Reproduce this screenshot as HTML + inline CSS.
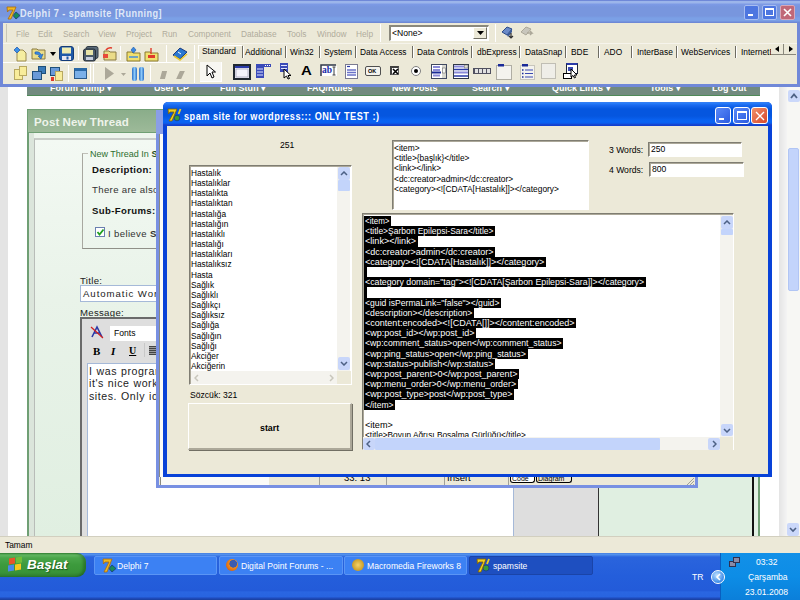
<!DOCTYPE html>
<html><head><meta charset="utf-8">
<style>
*{margin:0;padding:0;box-sizing:border-box}
html,body{width:800px;height:600px;overflow:hidden;background:#fff;font-family:"Liberation Sans",sans-serif;position:relative}
.a{position:absolute}
.t{position:absolute;white-space:nowrap;line-height:1}
.mi{position:absolute;top:30px;font-size:8.3px;color:#b0ac9c;white-space:nowrap;line-height:1}
.tab{position:absolute;top:48px;font-size:8.4px;color:#000;white-space:nowrap;line-height:1}
.tsep{position:absolute;top:46px;width:2px;height:12px;background:#6e6c62;border-right:1px solid #fff}
.vsep{position:absolute;width:1px;background:#aca899;border-right:1px solid #fff}
.grip{position:absolute;width:2px;background:repeating-linear-gradient(#d4d0c0 0 2px,transparent 2px 3px)}
</style></head><body>

<!-- ===== Firefox page background ===== -->
<div class="a" style="left:0;top:84px;width:8px;height:453px;background:#e4e4e4"></div>
<div class="a" style="left:779px;top:84px;width:8px;height:453px;background:linear-gradient(90deg,#e4e4e4,#f4f4f4)"></div>
<!-- scrollbar -->
<div class="a" style="left:787px;top:84px;width:13px;height:453px;background:#f7f7f4"></div>
<div class="a" style="left:788px;top:90px;width:12px;height:12px;background:#cbd8fa;border-radius:2px"></div>
<svg class="a" style="left:790px;top:93px" width="8" height="6"><path d="M1 5 L4 1.5 L7 5" stroke="#4d6185" stroke-width="1.8" fill="none"/></svg>
<div class="a" style="left:788px;top:148px;width:11px;height:143px;background:#c3d4fb;border:1px solid #b1c5f4;border-radius:2px"></div>
<div class="a" style="left:787px;top:523px;width:12px;height:13px;background:#cbd8fa;border-radius:2px"></div>
<svg class="a" style="left:789px;top:527px" width="8" height="6"><path d="M1 1 L4 4 L7 1" stroke="#4d6185" stroke-width="1.6" fill="none"/></svg>

<!-- nav bar -->
<div class="a" style="left:27px;top:84px;width:733px;height:12px;background:#728a7f;border-bottom:1px solid #4f8a58"></div>
<div class="t" style="left:50px;top:84px;font-size:9px;font-weight:bold;color:#fff">Forum Jump &#9662;</div>
<div class="t" style="left:154px;top:84px;font-size:9px;font-weight:bold;color:#fff">User CP</div>
<div class="t" style="left:220px;top:84px;font-size:9px;font-weight:bold;color:#fff">Full Stuff &#9662;</div>
<div class="t" style="left:307px;top:84px;font-size:9px;font-weight:bold;color:#fff">FAQ/Rules</div>
<div class="t" style="left:392px;top:84px;font-size:9px;font-weight:bold;color:#fff">New Posts</div>
<div class="t" style="left:472px;top:84px;font-size:9px;font-weight:bold;color:#fff">Search &#9662;</div>
<div class="t" style="left:552px;top:84px;font-size:9px;font-weight:bold;color:#fff">Quick Links &#9662;</div>
<div class="t" style="left:650px;top:84px;font-size:9px;font-weight:bold;color:#fff">Tools &#9662;</div>
<div class="t" style="left:712px;top:84px;font-size:9px;font-weight:bold;color:#fff">Log Out</div>

<!-- Post New Thread panel -->
<div class="a" style="left:27px;top:109px;width:733px;height:428px;background:#eef5ee;border-left:2px solid #6f9f74;border-right:2px solid #6f9f74"></div>
<div class="a" style="left:27px;top:109px;width:733px;height:24px;background:linear-gradient(#8aad8a,#9dba99);border:1px solid #6f9f74"></div>
<div class="t" style="left:34px;top:117px;font-size:11.5px;font-weight:bold;color:#eef3ea;letter-spacing:0.1px">Post New Thread</div>
<div class="a" style="left:29px;top:133px;width:5px;height:404px;background:#dbe5db"></div><div class="a" style="left:34px;top:138px;width:720px;height:400px;background:linear-gradient(#f3f9f3,#e9f3e9 40%,#e0efe1);border-left:1px solid #b8bcb8;border-top:2px solid #c8ccc8"></div>
<!-- fieldset -->
<div class="a" style="left:82px;top:153px;width:300px;height:96px;border:1px solid #c0c0b8;border-left:1px solid #a8a8a0;border-bottom:1px solid #909088"></div>
<div class="a" style="left:88px;top:149px;width:80px;height:9px;background:#f2f8f2"></div>
<div class="t" style="left:90px;top:150px;font-size:9px;color:#2e6f30">New Thread In <b style="color:#1f4f1f">Se</b></div>
<div class="t" style="left:92px;top:165px;font-size:9.6px;font-weight:bold;color:#111;letter-spacing:0.35px">Description:</div>
<div class="t" style="left:92px;top:185px;font-size:9.6px;color:#333;letter-spacing:0.35px">There are also</div>
<div class="t" style="left:92px;top:206px;font-size:9.6px;font-weight:bold;color:#111;letter-spacing:0.35px">Sub-Forums:</div>
<div class="a" style="left:95px;top:227px;width:10px;height:10px;background:#fff;border:1px solid #6a7fb0"></div>
<svg class="a" style="left:96px;top:228px" width="9" height="8"><path d="M1.5 4 L3.5 6.5 L7.5 1.5" stroke="#21a121" stroke-width="1.8" fill="none"/></svg>
<div class="t" style="left:108px;top:229px;font-size:9.6px;color:#333;letter-spacing:0.35px">I believe <b>S</b></div>
<div class="t" style="left:80px;top:276px;font-size:9.6px;color:#222;letter-spacing:0.3px">Title:</div>
<div class="a" style="left:80px;top:285px;width:400px;height:17px;background:#fff;border:1px solid #a5b9d8"></div>
<div class="t" style="left:83px;top:289px;font-size:9.6px;color:#222;letter-spacing:0.95px">Automatic Wor</div>
<div class="t" style="left:80px;top:308px;font-size:9.6px;color:#222;letter-spacing:0.3px">Message:</div>
<!-- editor -->
<div class="a" style="left:80px;top:317px;width:519px;height:220px;background:#dedede;border-left:2px solid #6a6a6a;border-top:2px solid #6a6a6a;border-right:1px solid #333"></div>
<div class="a" style="left:110px;top:326px;width:90px;height:15px;background:#fff"></div>
<div class="t" style="left:114px;top:329px;font-size:8.6px;color:#000">Fonts</div>
<svg class="a" style="left:90px;top:325px" width="14" height="14"><path d="M2 12 L7 2 L12 12 M4 8 H10" stroke="#2a3aa8" stroke-width="1.6" fill="none"/><path d="M1 2 L13 13" stroke="#d02020" stroke-width="1.2"/></svg>
<div class="t" style="left:93px;top:346px;font-size:11px;font-weight:bold;color:#000;font-family:'Liberation Serif'">B</div>
<div class="t" style="left:111px;top:346px;font-size:11px;font-weight:bold;font-style:italic;color:#000;font-family:'Liberation Serif'">I</div>
<div class="t" style="left:129px;top:346px;font-size:10px;font-weight:bold;text-decoration:underline;color:#000;font-family:'Liberation Serif'">U</div>
<div class="a" style="left:144px;top:343px;width:1px;height:14px;background:#c8c8c8"></div>
<div class="a" style="left:149px;top:346px;width:9px;height:9px;background:repeating-linear-gradient(#444 0 1px,#999 1px 2px)"></div>
<div class="a" style="left:87px;top:363px;width:427px;height:174px;background:#fff;border-left:1px solid #a5b9d8;border-top:1px solid #a5b9d8;border-right:1px solid #a5b9d8"></div>
<div class="t" style="left:89px;top:364.5px;font-size:10.6px;color:#222;letter-spacing:0.55px;word-spacing:0.5px;line-height:12.5px">I was programming<br>it's nice working<br>sites. Only idea</div>
<!-- right side of page visible -->
<div class="a" style="left:600px;top:300px;width:152px;height:237px;background:#e0efe1"></div>
<div class="a" style="left:752px;top:477px;width:2px;height:60px;background:#111"></div>
<div class="a" style="left:754px;top:477px;width:6px;height:60px;background:#e2f0e4;border-right:2px solid #6f9f74"></div>

<!-- ===== Firefox status bar ===== -->
<div class="a" style="left:0;top:536px;width:800px;height:17px;background:#ece9d8;border-top:1px solid #d2cfbf"></div>
<div class="t" style="left:5px;top:541px;font-size:8.4px;color:#000">Tamam</div>

<!-- ===== Taskbar ===== -->
<div class="a" style="left:0;top:553px;width:800px;height:47px;background:linear-gradient(#3a6fd8 0,#5a9af0 1px,#2a64dd 4px,#245edb 50%,#235bd9 80%,#2a66e2 83%,#2864e0 93%,#1f4cc0 96%,#1a3e9c 100%)"></div>
<div class="a" style="left:0;top:553px;width:86px;height:24px;background:linear-gradient(#3a8a3a 0,#62b862 2px,#4aa54a 5px,#3c9a3c 50%,#399439 80%,#2f7f30 100%);border-radius:0 9px 9px 0;box-shadow:inset -3px 0 3px rgba(0,40,0,.3)"></div>
<!-- windows logo -->
<div class="a" style="left:9px;top:558px;width:6px;height:6px;background:#e8542a;transform:skewY(-8deg)"></div>
<div class="a" style="left:16px;top:557px;width:6px;height:6px;background:#6fbe3a;transform:skewY(-8deg)"></div>
<div class="a" style="left:8px;top:565px;width:6px;height:6px;background:#4a8ae8;transform:skewY(-8deg)"></div>
<div class="a" style="left:15px;top:564px;width:6px;height:6px;background:#f8c81e;transform:skewY(-8deg)"></div>
<div class="t" style="left:27px;top:558px;font-size:13.5px;font-weight:bold;font-style:italic;color:#fff;text-shadow:1px 1px 1px #1c5a1c">Başlat</div>
<!-- task buttons -->
<div class="a" style="left:94px;top:556px;width:123px;height:19px;background:#3c81f3;border:1px solid #5a95f5;border-radius:2px"></div>
<div class="a" style="left:219px;top:556px;width:124px;height:19px;background:#3c81f3;border:1px solid #5a95f5;border-radius:2px"></div>
<div class="a" style="left:344px;top:556px;width:123px;height:19px;background:#3c81f3;border:1px solid #5a95f5;border-radius:2px"></div>
<div class="a" style="left:469px;top:556px;width:124px;height:19px;background:#1e4fc0;border:1px solid #1a44a8;border-radius:2px"></div>
<svg class="a" style="left:101px;top:558px" width="16" height="16"><path d="M11 7 L15 10.5 L11 14 L8 10.5Z" fill="#1a8a5a" stroke="#1a3a7a" stroke-width="0.8"/><path d="M2 1 H11 L6 14 H3 L8 4 H4 L2.5 6Z" fill="#f0b820" stroke="#a86a10" stroke-width="0.8"/></svg>
<div class="t" style="left:117px;top:562px;font-size:8.6px;color:#fff">Delphi 7</div>
<div class="a" style="left:226px;top:559px;width:12px;height:12px;border-radius:50%;background:radial-gradient(circle at 60% 40%,#3a5bb0 0 35%,#f08a1a 40%,#c84a0a 100%)"></div>
<div class="t" style="left:241px;top:562px;font-size:8.6px;color:#fff">Digital Point Forums - ...</div>
<div class="a" style="left:352px;top:559px;width:12px;height:12px;border-radius:50%;background:radial-gradient(#f4d26a,#b8860b)"></div>
<div class="t" style="left:367px;top:562px;font-size:8.6px;color:#fff">Macromedia Fireworks 8</div>
<svg class="a" style="left:476px;top:558px" width="16" height="16"><circle cx="10" cy="10" r="3" fill="#3a9a3a" stroke="#1a3a8a" stroke-width="0.8"/><path d="M1 1 H10 L5 14 H2 L7 4 H3 L1.5 6Z" fill="#f0d020" stroke="#806000" stroke-width="0.8"/><path d="M13 1 L11 6" stroke="#f0d020" stroke-width="1.8"/></svg>
<div class="t" style="left:493px;top:562px;font-size:8.6px;color:#fff">spamsite</div>
<!-- tray -->
<div class="a" style="left:720px;top:553px;width:80px;height:47px;background:linear-gradient(#1290e8 0,#0d8de6 50%,#0b7fda 100%);border-left:1px solid #0a5ec0"></div>
<div class="t" style="left:692px;top:573px;font-size:8.6px;color:#fff">TR</div>
<div class="a" style="left:711px;top:570px;width:14px;height:14px;border-radius:50%;background:radial-gradient(circle at 40% 35%,#bfe0ff,#3a8ae8 70%);border:1px solid #fff"></div>
<svg class="a" style="left:715px;top:573px" width="7" height="8"><path d="M5 1 L2 4 L5 7" stroke="#fff" stroke-width="1.6" fill="none"/></svg>
<div class="a" style="left:729px;top:561px;width:7px;height:6px;background:#8a8aa8;border:1px solid #303050"></div><div class="a" style="left:733px;top:557px;width:7px;height:6px;background:#8a8aa8;border:1px solid #303050"></div>
<div class="t" style="left:756px;top:558px;font-size:8.6px;color:#fff">03:32</div>
<div class="t" style="left:748px;top:573px;font-size:8.6px;color:#fff">Çarşamba</div>
<div class="t" style="left:745px;top:588px;font-size:8.6px;color:#fff">23.01.2008</div>

<!-- ===== Delphi IDE window ===== -->
<div class="a" style="left:0;top:0;width:800px;height:87px;background:#7088d8"></div>
<div class="a" style="left:0;top:0;width:800px;height:23px;background:linear-gradient(#6f88d8 0,#6f88d8 1px,#9cb5ea 1px,#9cb5ea 3px,#7d9ae6 4px,#7896de 7px,#7896de 16px,#7ba0e6 18px,#7ba0e6 21px,#6d88d6 22px)"></div>
<div class="a" style="left:3px;top:23px;width:794px;height:61px;background:#ece9d8"></div>
<svg class="a" style="left:5px;top:5px" width="16" height="16"><path d="M11 7 L15 10.5 L11 14 L8 10.5Z" fill="#1a8a5a" stroke="#1a3a7a" stroke-width="0.8"/><path d="M2 2 H11 L6 14 H3 L8 5 H4 L2.5 7Z" fill="#f0b820" stroke="#a86a10" stroke-width="0.8"/></svg>
<div class="t" style="left:20px;top:8.3px;font-size:11px;font-weight:bold;color:#dfe8f8;letter-spacing:0.55px;transform-origin:0 0;transform:scaleX(0.83)">Delphi 7 - spamsite [Running]</div>
<!-- title buttons -->
<div class="a" style="left:744px;top:5px;width:15px;height:15px;background:#4d76e0;border:1px solid #a8bdf0;border-radius:2px"></div>
<div class="a" style="left:748px;top:14px;width:5px;height:2px;background:#fff"></div>
<div class="a" style="left:762px;top:5px;width:15px;height:15px;background:#4d76e0;border:1px solid #a8bdf0;border-radius:2px"></div>
<div class="a" style="left:765px;top:8px;width:9px;height:8px;border:1px solid #fff;border-top:2px solid #fff"></div>
<div class="a" style="left:780px;top:5px;width:15px;height:15px;background:#c06878;border:1px solid #d8a8b8;border-radius:2px"></div>
<svg class="a" style="left:783px;top:8px" width="9" height="9"><path d="M1 1 L8 8 M8 1 L1 8" stroke="#fff" stroke-width="1.6"/></svg>

<!-- menu -->
<div class="a" style="left:6px;top:24px;width:1px;height:18px;background:#c9c6b6"></div>
<div class="mi" style="left:16px">File</div>
<div class="mi" style="left:38px">Edit</div>
<div class="mi" style="left:63px">Search</div>
<div class="mi" style="left:98px">View</div>
<div class="mi" style="left:126px">Project</div>
<div class="mi" style="left:162px">Run</div>
<div class="mi" style="left:188px">Component</div>
<div class="mi" style="left:241px">Database</div>
<div class="mi" style="left:287px">Tools</div>
<div class="mi" style="left:317px">Window</div>
<div class="mi" style="left:356px">Help</div>
<div class="a" style="left:3px;top:43px;width:794px;height:1px;background:#c9c6b6;border-bottom:1px solid #f6f4ec"></div>
<div class="vsep" style="left:380px;top:24px;height:18px"></div>
<div class="a" style="left:389px;top:25px;width:100px;height:16px;background:#fff;border:1px solid #fff;border-top:2px solid #8a887c;border-left:2px solid #8a887c"></div>
<div class="t" style="left:392px;top:29px;font-size:8.6px;color:#000">&lt;None&gt;</div>
<div class="a" style="left:473px;top:27px;width:14px;height:12px;background:#ece9d8;border:1px solid #fff;border-right-color:#716f64;border-bottom-color:#716f64"></div>
<svg class="a" style="left:477px;top:31px" width="7" height="4"><path d="M0 0 H7 L3.5 4Z" fill="#000"/></svg>
<div class="vsep" style="left:495px;top:24px;height:18px"></div>
<svg class="a" style="left:500px;top:24px" width="16" height="16"><path d="M2 8 L7 3 L12 5 L7 11Z" fill="#6a8ac8" stroke="#2a4a88" stroke-width="1"/><path d="M7 11 L12 5 L12 8 L8 13Z" fill="#3a5a98"/><path d="M11 9 V14 M9 12 L11 14 L13 12" stroke="#303030" stroke-width="1.2" fill="none"/></svg><svg class="a" style="left:519px;top:24px" width="16" height="16"><path d="M2 8 L7 3 L12 5 L7 11Z" fill="#c8c6bc" stroke="#aca899" stroke-width="1"/><path d="M8 9 H13 L11 7 M13 9 L11 11" stroke="#aca899" stroke-width="1.4" fill="none"/></svg>

<!-- toolbar row 1 & 2 separators -->
<div class="a" style="left:3px;top:62px;width:192px;height:1px;background:#c9c6b6;border-bottom:1px solid #fff"></div>
<div class="vsep" style="left:90px;top:64px;height:19px"></div>
<div class="vsep" style="left:194px;top:45px;height:38px"></div>
<!-- row1 icons -->
<svg class="a" style="left:13px;top:46px" width="15" height="16"><path d="M4 4 H10 L13 7 V15 H4Z" fill="#f6eea0" stroke="#9a8a50" stroke-width="1"/><path d="M1 4 L4 1 L7 4 L4 7Z" fill="#3a90e8" stroke="#2a60b0" stroke-width="0.8"/></svg>
<svg class="a" style="left:31px;top:46px" width="16" height="16"><path d="M1 3 H6 L7 4 H14 V13 H1Z" fill="#eadc88" stroke="#8a7a40" stroke-width="1"/><path d="M4 6 Q9 5 10 9 L12 8 L10 13 L7 10 L9 10 Q8 8 4 8Z" fill="#3a88e0" stroke="#1a58a8" stroke-width="0.6"/></svg>
<svg class="a" style="left:50px;top:52px" width="6" height="4"><path d="M0 0 H6 L3 4Z" fill="#000"/></svg>
<svg class="a" style="left:59px;top:46px" width="15" height="15"><rect x="0.5" y="0.5" width="14" height="14" rx="2.5" fill="#1f5aa8" stroke="#123a78"/><rect x="3" y="1.5" width="9" height="6" fill="#f0ecb0"/><rect x="3" y="10" width="9" height="4" fill="#e8e8f0"/><rect x="7.5" y="10.5" width="2" height="3" fill="#1f5aa8"/></svg>
<div class="vsep" style="left:78px;top:46px;height:14px"></div>
<svg class="a" style="left:83px;top:46px" width="16" height="16"><rect x="3" y="0.5" width="12" height="12" rx="2" fill="#5a6a78" stroke="#303a44"/><rect x="0.5" y="3" width="12" height="12" rx="2" fill="#4a5a68" stroke="#262e38"/><rect x="3" y="4" width="7" height="5" fill="#e8e4a8"/><rect x="3" y="11" width="7" height="3" fill="#c8d0e0"/></svg>
<svg class="a" style="left:102px;top:46px" width="15" height="16"><path d="M2 5 H7 L8 6 H14 V14 H2Z" fill="#eadc88" stroke="#8a7a40" stroke-width="1"/><path d="M4 4 Q6 1 10 2" stroke="#e03a2a" stroke-width="1.6" fill="none"/><rect x="1" y="8" width="5" height="4" fill="#e84a3a"/></svg>
<div class="vsep" style="left:120px;top:46px;height:14px"></div>
<svg class="a" style="left:126px;top:46px" width="15" height="16"><path d="M1 6 H6 L7 7 H14 V15 H1Z" fill="#f0e070" stroke="#8a7a30" stroke-width="1"/><path d="M7.5 1 L10 4 L7.5 7 L5 4Z" fill="#3a88e0" stroke="#1a58a8" stroke-width="0.6"/><path d="M3 11 H12" stroke="#3a88e0" stroke-width="1.4"/></svg>
<svg class="a" style="left:144px;top:46px" width="15" height="16"><path d="M1 6 H6 L7 7 H14 V15 H1Z" fill="#f0e070" stroke="#8a7a30" stroke-width="1"/><path d="M7 2 V8" stroke="#e03a2a" stroke-width="1.4"/><rect x="4" y="9" width="7" height="3" fill="#e03a2a"/></svg>
<div class="vsep" style="left:166px;top:45px;height:17px"></div>
<svg class="a" style="left:172px;top:46px" width="16" height="15"><path d="M1 9 L8 2 L15 6 L8 13Z" fill="#2a78d0" stroke="#1a3a80" stroke-width="1"/><path d="M2 10 L8 14 L15 8" stroke="#e8c830" stroke-width="1.6" fill="none"/><path d="M6 6 L9 8" stroke="#fff" stroke-width="1"/></svg>
<!-- row2 icons -->
<div class="a" style="left:14px;top:69px;width:9px;height:11px;background:#f8ec9a;border:1px solid #b8a860"></div>
<div class="a" style="left:19px;top:66px;width:8px;height:10px;background:#f8ec9a;border:1px solid #b8a860"></div>
<div class="a" style="left:38px;top:66px;width:8px;height:8px;background:#3a7ab8;border:1px solid #1f4f7a"></div>
<div class="a" style="left:32px;top:71px;width:10px;height:9px;background:#6a9ad8;border:1px solid #1f4f7a"></div>
<div class="a" style="left:50px;top:67px;width:10px;height:9px;background:#6a9ad8;border:1px solid #1f4f7a"></div>
<div class="a" style="left:55px;top:71px;width:8px;height:10px;background:#f8ec9a;border:1px solid #b8a860"></div>
<div class="a" style="left:51px;top:77px;width:3px;height:4px;background:#e03a2a"></div>
<div class="vsep" style="left:68px;top:65px;height:17px"></div>
<div class="a" style="left:74px;top:68px;width:13px;height:11px;background:#7ab0e8;border:1px solid #2a5a8a;border-top:3px solid #2a6aa8"></div>
<div class="vsep" style="left:93px;top:64px;height:19px"></div>
<svg class="a" style="left:105px;top:67px" width="9" height="13"><path d="M0 0 L9 6.5 L0 13Z" fill="#aca899"/></svg>
<svg class="a" style="left:121px;top:73px" width="5" height="3"><path d="M0 0 H5 L2.5 3Z" fill="#aca899"/></svg>
<div class="a" style="left:132px;top:67px;width:5px;height:14px;background:linear-gradient(90deg,#2a70c8,#8ac8f8 50%,#2a70c8);border-radius:2px"></div>
<div class="a" style="left:139px;top:67px;width:5px;height:14px;background:linear-gradient(90deg,#2a70c8,#8ac8f8 50%,#2a70c8);border-radius:2px"></div>
<div class="vsep" style="left:150px;top:65px;height:17px"></div>
<div class="a" style="left:161px;top:71px;width:5px;height:8px;background:#aca899;transform:skewX(-15deg)"></div>
<div class="a" style="left:178px;top:71px;width:5px;height:8px;background:#aca899;transform:skewX(-25deg)"></div>

<!-- palette -->
<div class="a" style="left:198px;top:45px;width:44px;height:14px;background:#ece9d8;border-left:1px solid #fff;border-top:1px solid #fff"></div>
<div class="tab" style="left:202px;top:47px">Standard</div>
<div class="tab" style="left:245px">Additional</div>
<div class="tab" style="left:290px">Win32</div>
<div class="tab" style="left:324px">System</div>
<div class="tab" style="left:360px">Data Access</div>
<div class="tab" style="left:417px">Data Controls</div>
<div class="tab" style="left:477px">dbExpress</div>
<div class="tab" style="left:525px">DataSnap</div>
<div class="tab" style="left:571px">BDE</div>
<div class="tab" style="left:604px">ADO</div>
<div class="tab" style="left:637px">InterBase</div>
<div class="tab" style="left:681px">WebServices</div>
<div class="tab" style="left:741px">InternetE</div>
<div class="tsep" style="left:242px;top:46px"></div>
<div class="tsep" style="left:285px"></div>
<div class="tsep" style="left:319px"></div>
<div class="tsep" style="left:355px"></div>
<div class="tsep" style="left:412px"></div>
<div class="tsep" style="left:471px"></div>
<div class="tsep" style="left:519px"></div>
<div class="tsep" style="left:565px"></div>
<div class="tsep" style="left:598px"></div>
<div class="tsep" style="left:631px"></div>
<div class="tsep" style="left:676px"></div>
<div class="tsep" style="left:735px"></div>
<div class="a" style="left:771px;top:44px;width:26px;height:11px;background:#ece9d8"></div>
<svg class="a" style="left:775px;top:46px" width="4" height="6"><path d="M4 0 V6 L0 3Z" fill="#000"/></svg>
<div class="a" style="left:783px;top:44px;width:1px;height:11px;background:#8a887c"></div>
<svg class="a" style="left:789px;top:46px" width="4" height="6"><path d="M0 0 V6 L4 3Z" fill="#000"/></svg>
<div class="a" style="left:771px;top:54px;width:25px;height:1px;background:#8a887c"></div>
<!-- palette icons -->
<div class="a" style="left:200px;top:62px;width:22px;height:20px;background:#f8f7f2;border-right:1px solid #fff;border-bottom:1px solid #fff"></div>
<svg class="a" style="left:206px;top:64px" width="10" height="15"><path d="M1 1 L1 12 L4 9 L6 14 L8 13 L6 8 L9.5 8Z" fill="#fff" stroke="#000" stroke-width="1"/></svg>
<svg class="a" style="left:233px;top:64px" width="18" height="16"><rect x="1" y="1" width="16" height="14" fill="#eeeef8" stroke="#202830" stroke-width="2"/><rect x="2" y="2" width="14" height="2" fill="#2a3aa8"/><rect x="3" y="5" width="12" height="8" fill="#f4f4fc" stroke="#9090a8" stroke-width="0.6"/></svg>
<svg class="a" style="left:256px;top:64px" width="16" height="14"><rect x="0" y="0" width="15" height="3" fill="#3a4ab8"/><path d="M9 1.5 H14" stroke="#fff" stroke-width="1" stroke-dasharray="1 1"/><rect x="0" y="3" width="8" height="11" fill="#3a4ab8"/><path d="M1 5 H7 M1 8 H7 M1 11 H7" stroke="#e0e4ff" stroke-width="1"/></svg>
<svg class="a" style="left:280px;top:63px" width="8" height="9"><rect x="0" y="0" width="8" height="9" fill="#3a4ab8"/><path d="M1 2.5 H7 M1 5.5 H7" stroke="#e0e4ff" stroke-width="1"/></svg>
<svg class="a" style="left:283px;top:68px" width="9" height="12"><path d="M1 1 L1 10 L3.5 8 L5 11 L6.5 10.5 L5 7.5 L8 7.5Z" fill="#fff" stroke="#000" stroke-width="1"/></svg>
<div class="t" style="left:301px;top:64px;font-size:13px;font-weight:bold;color:#000;transform:scaleX(1.15);transform-origin:0 0">A</div>
<svg class="a" style="left:320px;top:64px" width="18" height="13"><path d="M1 12 V1 H16" stroke="#303848" stroke-width="1.5" fill="#fff"/><rect x="2" y="2" width="15" height="10" fill="#fff"/><path d="M14 3 V11 M12.5 3 H15.5 M12.5 11 H15.5" stroke="#404040" stroke-width="1"/></svg>
<div class="t" style="left:322px;top:66px;font-size:9.5px;font-weight:bold;color:#1a2aa8;font-family:'Liberation Serif'">ab</div>
<svg class="a" style="left:345px;top:64px" width="13" height="15"><rect x="0.5" y="0.5" width="12" height="14" fill="#fff" stroke="#7a7a90"/><path d="M2 2.5 H5" stroke="#2a3aa8" stroke-width="1.2"/><path d="M2 6 H11 M2 8.5 H11 M2 11 H11" stroke="#6a72c8" stroke-width="1.6"/></svg>
<div class="a" style="left:365px;top:66px;width:16px;height:10px;background:#f4f3ee;border:1px solid #505050;border-radius:2px"></div>
<div class="t" style="left:368px;top:69px;font-size:5.5px;font-weight:bold;color:#000">OK</div>
<div class="a" style="left:390px;top:66px;width:9px;height:9px;background:#fff;border:1px solid #606060;border-top:2px solid #404040;border-left:2px solid #404040"></div>
<svg class="a" style="left:392px;top:68px" width="7" height="7"><path d="M1 1 L6 6 M6 1 L1 6" stroke="#000" stroke-width="1.6"/></svg>
<div class="a" style="left:411px;top:66px;width:10px;height:10px;border-radius:50%;background:#fff;border:1px solid #808080"></div>
<div class="a" style="left:414px;top:69px;width:4px;height:4px;border-radius:50%;background:#000"></div>
<svg class="a" style="left:431px;top:64px" width="16" height="15"><rect x="0.5" y="0.5" width="15" height="14" fill="#fff" stroke="#404860"/><path d="M2 3 H9 M2 6 H9 M2 11.5 H9" stroke="#8a8ad8" stroke-width="2"/><path d="M1 8.5 H10" stroke="#1a2a98" stroke-width="2"/><rect x="11" y="1" width="4" height="13" fill="#d8d8d0"/><rect x="11.5" y="4" width="3" height="5" fill="#f8f8f4" stroke="#707070" stroke-width="0.6"/></svg>
<svg class="a" style="left:453px;top:64px" width="16" height="15"><rect x="0.5" y="0.5" width="15" height="14" fill="#fff" stroke="#303848"/><path d="M1 2.5 H11" stroke="#8a8ad8" stroke-width="2"/><rect x="11.5" y="1" width="3.5" height="3" fill="#e0e0d8" stroke="#606060" stroke-width="0.5"/><path d="M1 5.5 H15 M1 12 H15" stroke="#2a3aa8" stroke-width="1.6"/><path d="M1 8.5 H15" stroke="#8a8ad8" stroke-width="2"/></svg>
<div class="a" style="left:473px;top:68px;width:18px;height:6px;background:repeating-linear-gradient(90deg,#505060 0 1px,#e0e0e0 1px 4px);border:1px solid #505060"></div>
<svg class="a" style="left:496px;top:63px" width="16" height="17"><rect x="0.5" y="2.5" width="15" height="14" fill="#f4f3ee" stroke="#b0aea4"/><rect x="2" y="1" width="6" height="2.5" fill="#1a2a98"/></svg>
<svg class="a" style="left:520px;top:63px" width="15" height="17"><rect x="0.5" y="2.5" width="14" height="14" fill="#f4f3ee" stroke="#c8c6bc"/><rect x="2" y="1" width="6" height="2.5" fill="#1a2a98"/><path d="M2 7 H3.5 M2 10.5 H3.5 M2 14 H3.5" stroke="#1a2a98" stroke-width="1.4"/><path d="M5 7 H13 M5 10.5 H13 M5 14 H13" stroke="#3a4ab0" stroke-width="1.2"/></svg>
<div class="a" style="left:541px;top:63px;width:15px;height:16px;background:#efeee8;border:1px solid #c0beb4"></div>
<div class="a" style="left:566px;top:63px;width:12px;height:11px;background:#fff;border:1px solid #202838;border-top:2px solid #2a3aa8"></div>
<div class="a" style="left:568px;top:67px;width:5px;height:4px;background:#3a4ab0"></div>
<div class="a" style="left:563px;top:73px;width:9px;height:6px;background:#fff;border:1px solid #000"></div>
<svg class="a" style="left:570px;top:68px" width="8" height="11"><path d="M1 1 L1 9 L3 7.5 L4.5 10 L5.5 9.5 L4.5 7 L7 7Z" fill="#fff" stroke="#000" stroke-width="1"/></svg>

<!-- ===== Code editor outline (light blue) ===== -->
<div class="a" style="left:156px;top:110px;width:542px;height:378px;border:3px solid #7890e2;border-top:none;border-radius:0"></div><div class="a" style="left:156px;top:110px;width:8px;height:24px;background:#8a9ee6"></div>
<div class="a" style="left:159px;top:134px;width:4px;height:343px;background:#fbfbf8;border-left:1px solid #8a8a80"></div>
<div class="a" style="left:159px;top:477px;width:536px;height:8px;background:#ece9d8"></div><div class="a" style="left:160px;top:477px;width:109px;height:8px;background:#fbfbf8;border-left:1px solid #8a8a80"></div>
<div class="t" style="left:344px;top:473px;font-size:9.5px;color:#000">33: 13</div>
<div class="a" style="left:319px;top:477px;width:1px;height:8px;background:#a0a098"></div>
<div class="a" style="left:386px;top:477px;width:1px;height:8px;background:#a0a098"></div>
<div class="a" style="left:444px;top:477px;width:1px;height:8px;background:#a0a098"></div>
<div class="t" style="left:447px;top:473px;font-size:9.5px;color:#000">Insert</div>
<div class="a" style="left:508px;top:477px;width:1px;height:8px;background:#a0a098"></div>
<div class="a" style="left:510px;top:476px;width:25px;height:7px;background:#fff;border:1px solid #000;border-top:none;border-radius:0 0 3px 3px"></div>
<div class="a" style="left:536px;top:476px;width:36px;height:7px;background:#ece9d8;border:1px solid #000;border-top:none;border-radius:0 0 3px 3px"></div>
<div class="t" style="left:512px;top:475px;font-size:7px;color:#000">Code</div>
<div class="t" style="left:538px;top:475px;font-size:7px;color:#000">Diagram</div>
<svg class="a" style="left:686px;top:477px" width="9" height="8"><path d="M8 1 L1 8 M8 4 L4 8 M8 7 L7 8" stroke="#a0a098" stroke-width="1"/></svg>

<!-- ===== Spam window ===== -->
<div class="a" style="left:163px;top:102px;width:609px;height:375px;background:#0842d8;border-radius:5px 5px 0 0"></div>
<div class="a" style="left:163px;top:102px;width:609px;height:24px;background:linear-gradient(#3a7cf0 0,#2a80fa 1px,#1a6af0 3px,#0556df 7px,#0556df 14px,#0a64f4 19px,#0a60f0 21px,#1a3ec8 23px,#0842d8 24px);border-radius:5px 5px 0 0"></div>
<div class="a" style="left:167px;top:126px;width:601px;height:348px;background:#ece9d8"></div>
<svg class="a" style="left:167px;top:108px" width="16" height="16"><circle cx="10" cy="10" r="2.8" fill="#3a9a3a" stroke="#1a3a8a" stroke-width="0.8"/><path d="M1 1 H10 L5 13 H2 L7 4 H3 L1.5 6Z" fill="#f0d020" stroke="#806000" stroke-width="0.8"/><path d="M13.5 1 L11.5 6" stroke="#f0d020" stroke-width="1.8"/></svg>
<div class="t" style="left:184px;top:110.5px;font-size:11px;font-weight:bold;color:#fff;letter-spacing:0.6px;transform-origin:0 0;transform:scaleX(0.83)">spam site for wordpress::: ONLY TEST :)</div>
<!-- title buttons -->
<div class="a" style="left:715px;top:107px;width:16px;height:17px;background:linear-gradient(135deg,#5a8af8,#2a5ae0);border:1px solid #fff;border-radius:3px"></div>
<div class="a" style="left:719px;top:118px;width:5px;height:2px;background:#fff"></div>
<div class="a" style="left:733px;top:107px;width:17px;height:17px;background:linear-gradient(135deg,#5a8af8,#2a5ae0);border:1px solid #fff;border-radius:3px"></div>
<div class="a" style="left:737px;top:111px;width:10px;height:9px;border:1px solid #fff;border-top:2px solid #fff"></div>
<div class="a" style="left:751px;top:107px;width:17px;height:17px;background:linear-gradient(135deg,#f0906a,#d8482a);border:1px solid #fff;border-radius:3px"></div>
<svg class="a" style="left:755px;top:111px" width="10" height="10"><path d="M1 1 L9 9 M9 1 L1 9" stroke="#fff" stroke-width="1.4"/></svg>

<div class="t" style="left:280px;top:141px;font-size:8.6px;color:#000">251</div>
<!-- listbox -->
<div class="a" style="left:189px;top:165px;width:163px;height:220px;background:#fff;border:1px solid #7f7d72;border-right-color:#fff;border-bottom-color:#fff;box-shadow:inset 1px 1px 0 #aca899"></div>
<div class="t" style="left:191px;top:168px;font-size:8.3px;color:#000;line-height:10.16px">Hastalık<br>Hastalıklar<br>Hastalıkta<br>Hastalıktan<br>Hastalığa<br>Hastalığın<br>Hastalıklı<br>Hastalığı<br>Hastalıkları<br>Hastalıksız<br>Hasta<br>Sağlık<br>Sağlıklı<br>Sağlıkçı<br>Sağlıksız<br>Sağlığa<br>Sağlığın<br>Sağlığı<br>Akciğer<br>Akciğerin</div>
<div class="a" style="left:337px;top:167px;width:13px;height:204px;background:#f4f3ee"></div>
<div class="a" style="left:338px;top:167px;width:12px;height:13px;background:#c8d6fa;border-radius:2px"></div>
<svg class="a" style="left:340px;top:171px" width="8" height="5"><path d="M1 4 L4 1 L7 4" stroke="#4d6185" stroke-width="1.5" fill="none"/></svg>
<div class="a" style="left:338px;top:180px;width:12px;height:11px;background:#c3d4fb;border-radius:1px"></div>
<div class="a" style="left:338px;top:357px;width:12px;height:13px;background:#c8d6fa;border-radius:2px"></div>
<svg class="a" style="left:340px;top:361px" width="8" height="5"><path d="M1 1 L4 4 L7 1" stroke="#4d6185" stroke-width="1.5" fill="none"/></svg>
<div class="a" style="left:191px;top:371px;width:160px;height:13px;background:#f4f3ee"></div><div class="a" style="left:337px;top:371px;width:14px;height:13px;background:#ece9d8"></div>
<svg class="a" style="left:194px;top:374px" width="5" height="8"><path d="M4 1 L1 4 L4 7" stroke="#c8c6bc" stroke-width="1.5" fill="none"/></svg>
<svg class="a" style="left:329px;top:374px" width="5" height="8"><path d="M1 1 L4 4 L1 7" stroke="#c8c6bc" stroke-width="1.5" fill="none"/></svg>
<div class="t" style="left:190px;top:391px;font-size:8.6px;color:#000">Sözcük: 321</div>
<!-- start button -->
<div class="a" style="left:188px;top:403px;width:164px;height:47px;background:#ece9d8;border:1px solid #fff;border-right:2px solid #aca899;border-bottom:2px solid #aca899;box-shadow:1px 1px 0 #716f64"></div>
<div class="t" style="left:260px;top:424px;font-size:8.8px;font-weight:bold;color:#000">start</div>

<!-- upper memo -->
<div class="a" style="left:392px;top:140px;width:197px;height:70px;background:#fff;border:1px solid #7f7d72;border-right-color:#fff;border-bottom-color:#fff;box-shadow:inset 1px 1px 0 #aca899"></div>
<div class="t" style="left:394px;top:143px;font-size:8.4px;color:#000;line-height:10.2px">&lt;item&gt;<br>&lt;title&gt;{başlık}&lt;/title&gt;<br>&lt;link&gt;&lt;/link&gt;<br>&lt;dc:creator&gt;admin&lt;/dc:creator&gt;<br>&lt;category&gt;&lt;![CDATA[Hastalık]]&gt;&lt;/category&gt;</div>

<div class="t" style="left:609px;top:146px;font-size:8.6px;color:#000">3 Words:</div>
<div class="t" style="left:609px;top:166px;font-size:8.6px;color:#000">4 Words:</div>
<div class="a" style="left:648px;top:142px;width:94px;height:15px;background:#fff;border:1px solid #7f7d72;border-right-color:#fff;border-bottom-color:#fff;box-shadow:inset 1px 1px 0 #aca899"></div>
<div class="t" style="left:651px;top:145px;font-size:8.6px;color:#000">250</div>
<div class="a" style="left:649px;top:162px;width:95px;height:15px;background:#fff;border:1px solid #7f7d72;border-right-color:#fff;border-bottom-color:#fff;box-shadow:inset 1px 1px 0 #aca899"></div>
<div class="t" style="left:652px;top:165px;font-size:8.6px;color:#000">800</div>

<!-- big memo -->
<div class="a" style="left:362px;top:213px;width:372px;height:237px;background:#fff;border:1px solid #7f7d72;border-right-color:#fff;border-bottom-color:#fff;box-shadow:inset 1px 1px 0 #aca899"></div>
<div class="a" style="left:364px;top:216px;width:356px;height:221px;overflow:hidden;font-size:8.6px;line-height:10.2px;white-space:nowrap">
<div class="s" style="top:0.0px;width:27px"><span style="transform:scaleX(0.932)">&lt;item&gt;</span></div>
<div class="s" style="top:10.2px;width:131px"><span style="transform:scaleX(0.985)">&lt;title&gt;Şarbon Epilepsi-Sara&lt;/title&gt;</span></div>
<div class="s" style="top:20.4px;width:53.5px"><span style="transform:scaleX(1.057)">&lt;link&gt;&lt;/link&gt;</span></div>
<div class="s" style="top:30.6px;width:131px"><span style="transform:scaleX(1.051)">&lt;dc:creator&gt;admin&lt;/dc:creator&gt;</span></div>
<div class="s" style="top:40.8px;width:182px"><span style="transform:scaleX(1.060)">&lt;category&gt;&lt;![CDATA[Hastalık]]&gt;&lt;/category&gt;</span></div>
<div class="s" style="top:51.0px;width:3px"></div>
<div class="s" style="top:61.2px;width:281.6px"><span style="transform:scaleX(1.022)">&lt;category domain="tag"&gt;&lt;![CDATA[Şarbon Epilepsi-Sara]]&gt;&lt;/category&gt;</span></div>
<div class="s" style="top:71.4px;width:3px"></div>
<div class="s" style="top:81.6px;width:137px"><span style="transform:scaleX(1.004)">&lt;guid isPermaLink="false"&gt;&lt;/guid&gt;</span></div>
<div class="s" style="top:91.8px;width:110px"><span style="transform:scaleX(1.018)">&lt;description&gt;&lt;/description&gt;</span></div>
<div class="s" style="top:102.0px;width:212px"><span style="transform:scaleX(1.051)">&lt;content:encoded&gt;&lt;![CDATA[]]&gt;&lt;/content:encoded&gt;</span></div>
<div class="s" style="top:112.2px;width:112px"><span style="transform:scaleX(1.046)">&lt;wp:post_id&gt;&lt;/wp:post_id&gt;</span></div>
<div class="s" style="top:122.4px;width:199px"><span style="transform:scaleX(1.011)">&lt;wp:comment_status&gt;open&lt;/wp:comment_status&gt;</span></div>
<div class="s" style="top:132.6px;width:163.5px"><span style="transform:scaleX(1.030)">&lt;wp:ping_status&gt;open&lt;/wp:ping_status&gt;</span></div>
<div class="s" style="top:142.8px;width:131px"><span style="transform:scaleX(1.051)">&lt;wp:status&gt;publish&lt;/wp:status&gt;</span></div>
<div class="s" style="top:153.0px;width:155px"><span style="transform:scaleX(1.053)">&lt;wp:post_parent&gt;0&lt;/wp:post_parent&gt;</span></div>
<div class="s" style="top:163.2px;width:153.5px"><span style="transform:scaleX(1.030)">&lt;wp:menu_order&gt;0&lt;/wp:menu_order&gt;</span></div>
<div class="s" style="top:173.4px;width:150px"><span style="transform:scaleX(1.054)">&lt;wp:post_type&gt;post&lt;/wp:post_type&gt;</span></div>
<div class="s" style="top:183.6px;width:31px"><span style="transform:scaleX(0.994)">&lt;/item&gt;</span></div>
<div class="n" style="top:204.0px"><span style="transform:scaleX(1.06)">&lt;item&gt;</span></div>
<div class="n" style="top:214.2px"><span style="transform:scaleX(0.965)">&lt;title&gt;Boyun Ağrısı Boşalma Gürlüğü&lt;/title&gt;</span></div>
</div>
<style>.s{position:absolute;left:0;height:10.2px;background:#000;color:#fff;padding-left:1px;overflow:hidden}.n{position:absolute;left:1px;color:#000}.s span,.n span{display:inline-block;transform-origin:0 0}</style>
<!-- memo scrollbars -->
<div class="a" style="left:720px;top:215px;width:13px;height:222px;background:#f4f3ee"></div>
<div class="a" style="left:721px;top:216px;width:12px;height:13px;background:#c8d6fa;border-radius:2px"></div>
<svg class="a" style="left:723px;top:220px" width="8" height="5"><path d="M1 4 L4 1 L7 4" stroke="#4d6185" stroke-width="1.5" fill="none"/></svg>
<div class="a" style="left:721px;top:229px;width:12px;height:6px;background:#c3d4fb;border-radius:1px"></div>
<div class="a" style="left:721px;top:424px;width:12px;height:12px;background:#c8d6fa;border-radius:2px"></div>
<svg class="a" style="left:723px;top:428px" width="8" height="5"><path d="M1 1 L4 4 L7 1" stroke="#4d6185" stroke-width="1.5" fill="none"/></svg>
<div class="a" style="left:363px;top:437px;width:357px;height:13px;background:#f4f3ee"></div>
<div class="a" style="left:363px;top:438px;width:12px;height:12px;background:#c8d6fa;border-radius:2px"></div>
<svg class="a" style="left:366px;top:440px" width="5" height="8"><path d="M4 1 L1 4 L4 7" stroke="#4d6185" stroke-width="1.5" fill="none"/></svg>
<div class="a" style="left:375px;top:438px;width:285px;height:12px;background:#c3d4fb;border-radius:1px"></div>
<div class="a" style="left:708px;top:438px;width:12px;height:12px;background:#c8d6fa;border-radius:2px"></div><div class="a" style="left:720px;top:437px;width:13px;height:13px;background:#ece9d8"></div>
<svg class="a" style="left:712px;top:440px" width="5" height="8"><path d="M1 1 L4 4 L1 7" stroke="#4d6185" stroke-width="1.5" fill="none"/></svg>

</body></html>
